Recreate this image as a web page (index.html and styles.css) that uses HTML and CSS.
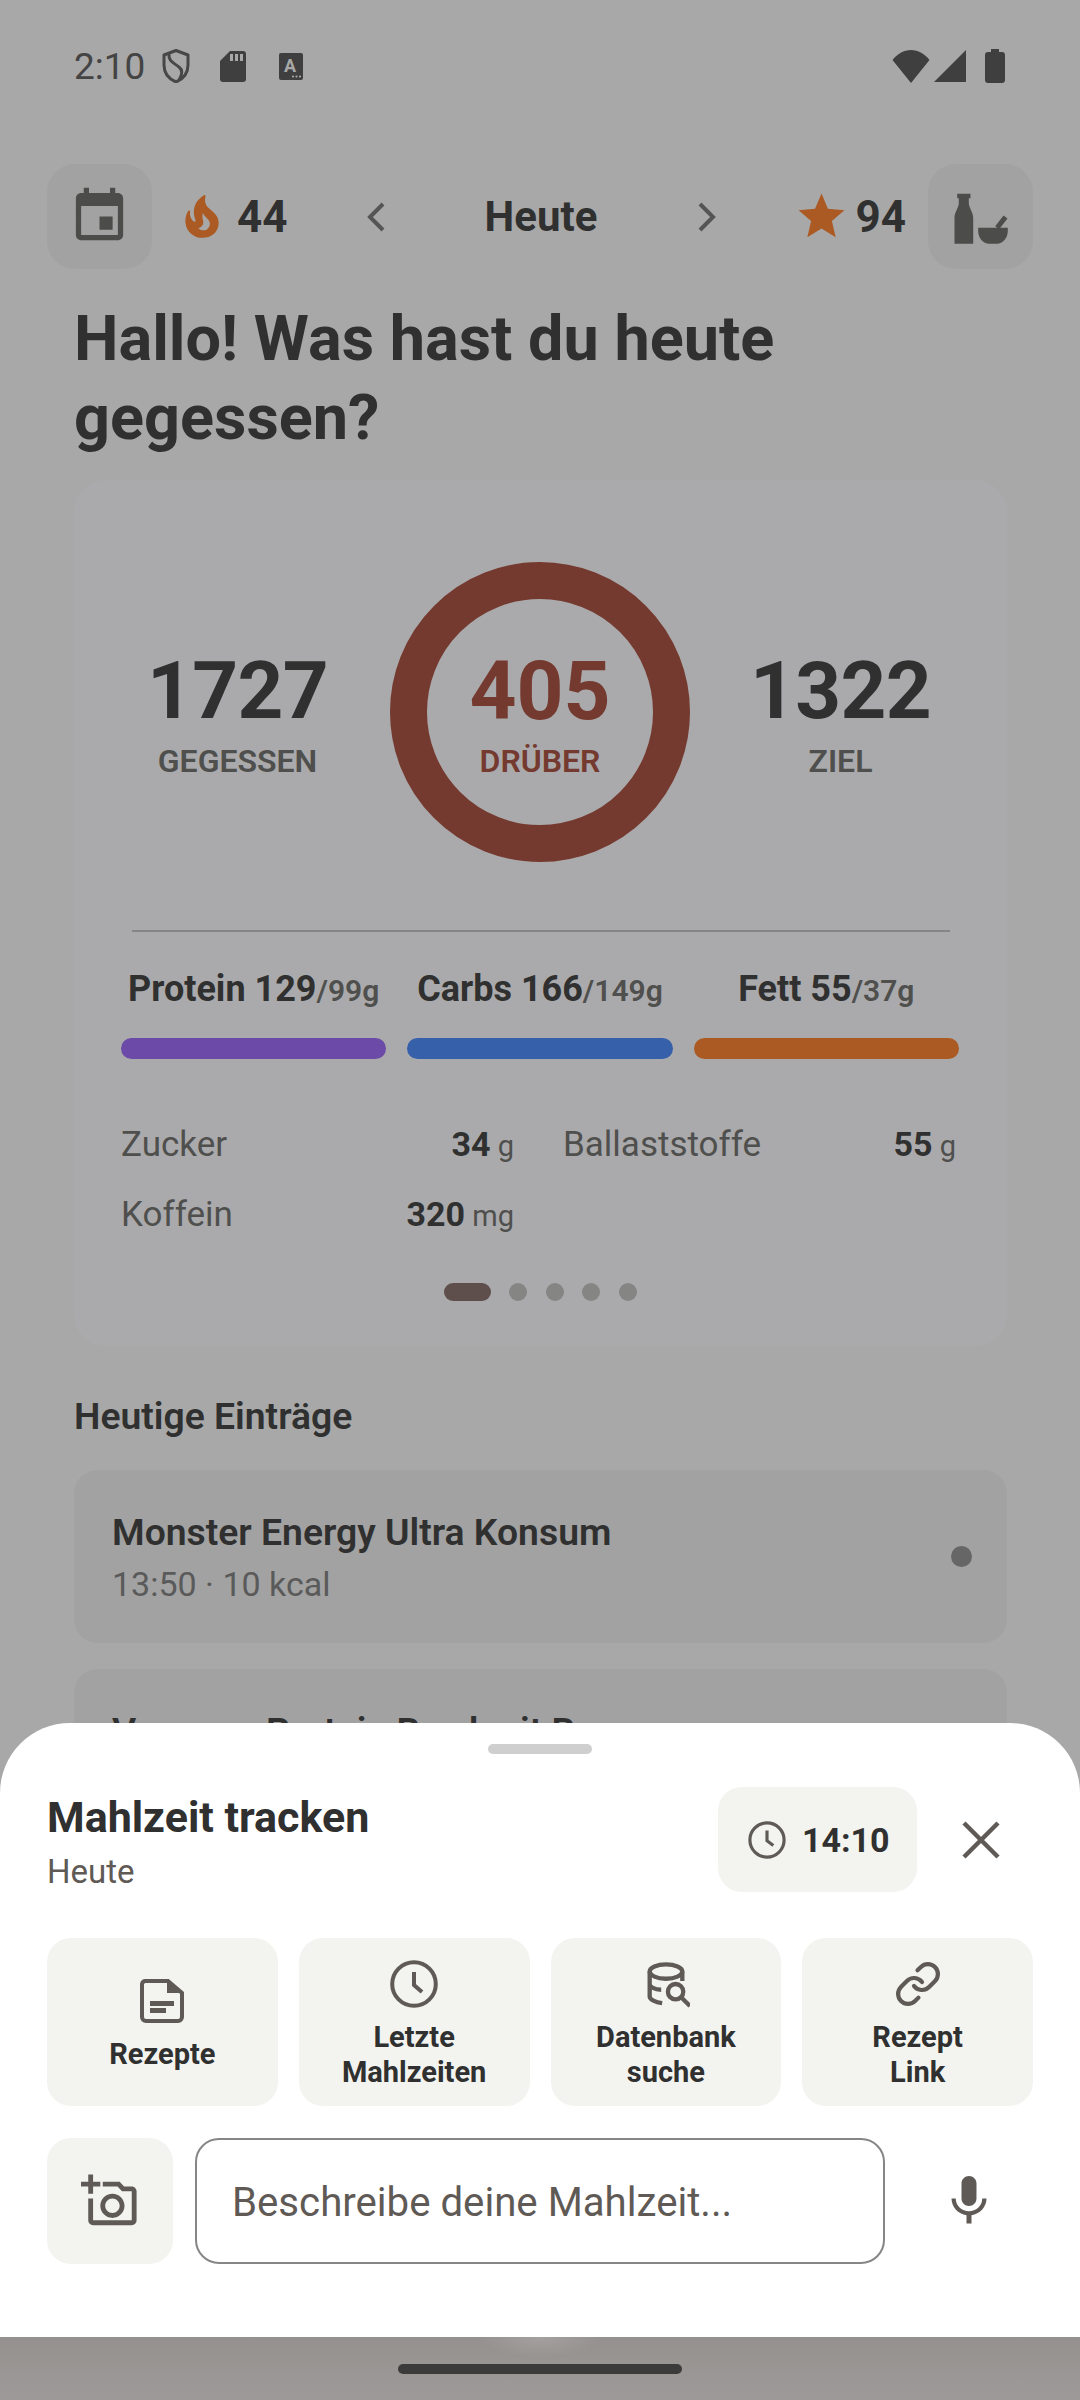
FILE: index.html
```html
<!DOCTYPE html>
<html lang="de">
<head>
    <meta charset="UTF-8">
    <meta name="viewport" content="width=device-width, initial-scale=1.0">
    <title>Mahlzeit tracken</title>
    <link rel="stylesheet" href="styles.css">
</head>
<body>
<div class="screen">
    <!-- Status bar -->
    <div class="status-bar">
        <div class="status-left">
            <span class="status-time">2:10</span>
            <svg class="ic-shield" viewBox="0 0 28 34"><path d="M14 1.5 26 6v10c0 8-5 14-12 17C7 30 2 24 2 16V6z" fill="none" stroke="#474747" stroke-width="3" stroke-linejoin="round"/><path d="M7 5c-1 7 5 9 10 13 4 3 3 8 0 13" fill="none" stroke="#474747" stroke-width="3"/></svg>
            <svg class="ic-sd" viewBox="0 0 26 31"><path d="M10 0h13a3 3 0 0 1 3 3v25a3 3 0 0 1-3 3H3a3 3 0 0 1-3-3V10z" fill="#3f3f3f"/><rect x="10" y="3" width="3" height="7" fill="#a8a8a8"/><rect x="15" y="3" width="3" height="7" fill="#a8a8a8"/><rect x="20" y="3" width="3" height="7" fill="#a8a8a8"/></svg>
            <svg class="ic-a" viewBox="0 0 24 27"><rect width="24" height="27" rx="2" fill="#3f3f3f"/><text x="11" y="18.500" font-family="Roboto, sans-serif" font-weight="700" font-size="18" text-anchor="middle" fill="#a8a8a8">A</text><circle cx="14" cy="23.500" r="1.100" fill="#a8a8a8"/><circle cx="17.500" cy="23.500" r="1.100" fill="#a8a8a8"/><circle cx="21" cy="23.500" r="1.100" fill="#a8a8a8"/></svg>
        </div>
        <div class="status-right">
            <svg class="ic-wifi" viewBox="0 0 38 33"><path d="M19 33 .5 10C5 4 12 0 19 0s14 4 18.500 10z" fill="#3f3f3f"/></svg>
            <svg class="ic-signal" viewBox="0 0 32 32"><path d="M32 0v32H0z" fill="#3f3f3f"/></svg>
            <svg class="ic-battery" viewBox="0 0 20 34"><path d="M6 0h8v3h3a3 3 0 0 1 3 3v25a3 3 0 0 1-3 3H3a3 3 0 0 1-3-3V6a3 3 0 0 1 3-3h3z" fill="#3f3f3f"/></svg>
        </div>
    </div>

    <!-- Top bar -->
    <div class="top-bar">
        <div class="square-btn">
            <svg class="ic-calendar" viewBox="0 0 24 24"><path d="M17 12h-5v5h5v-5zM16 1v2H8V1H6v2H5c-1.110 0-1.990.9-1.990 2L3 19c0 1.100.89 2 2 2h14c1.100 0 2-.9 2-2V5c0-1.100-.9-2-2-2h-1V1h-2zm3 18H5V8h14v11z"/></svg>
        </div>
        <div class="counter counter-streak">
            <svg class="ic-flame" viewBox="0 0 24 24"><path d="M19.480 12.350c-1.570-4.080-7.160-4.300-5.810-10.230.1-.44-.37-.78-.75-.55C9.290 3.710 6.680 8 8.870 13.620c.18.46-.36.89-.75.59-1.810-1.370-2-3.340-1.840-4.750.06-.52-.62-.77-.91-.34C4.690 10.160 4 11.840 4 14.370c.38 5.600 5.110 7.320 6.810 7.540 2.430.31 5.060-.14 6.950-1.870 2.080-1.930 2.840-5.010 1.720-7.690zm-9.280 5.030c1.440-.35 2.180-1.390 2.380-2.310.33-1.430-.96-2.830-.09-5.090.33 1.870 3.270 3.040 3.270 5.080.08 2.530-2.660 4.700-5.560 2.320z"/></svg>
            <span>44</span>
        </div>
        <div class="day-nav">
            <svg class="ic-chevron" viewBox="0 0 18 30"><path d="M16 2 3 15l13 13"/></svg>
            <span class="day-label">Heute</span>
            <svg class="ic-chevron" viewBox="0 0 18 30"><path d="m2 2 13 13L2 28"/></svg>
        </div>
        <div class="counter counter-stars">
            <svg class="ic-star" viewBox="0 0 24 24"><path d="M12 17.270 18.180 21l-1.640-7.030L22 9.240l-7.190-.61L12 2 9.190 8.630 2 9.240l5.460 4.730L5.820 21z"/></svg>
            <span>94</span>
        </div>
        <div class="square-btn square-btn-right">
            <svg class="ic-pantry" viewBox="0 0 60 54"><path d="M6.200 3.700H19.500V8.300H17.800V12.700C17.800 18 22.200 22 22.200 27.700V53.700H3.500V27.700C3.500 22 7.800 18 7.800 12.700V8.300H6.200Z"/><path d="M27.200 37.700H56.800V41c0 7-5 12.700-11 12.700h-7.600C32 53.700 27.200 48 27.200 41z"/><path class="ic-pestle" d="M46.200 37.700 54.500 27"/></svg>
        </div>
    </div>

    <h1 class="greeting">Hallo! Was hast du heute gegessen?</h1>

    <!-- Summary card -->
    <section class="summary-card">
        <div class="stats">
            <div class="stat stat-left">
                <div class="stat-num">1727</div>
                <div class="stat-label">GEGESSEN</div>
            </div>
            <div class="ring">
                <div class="stat-num stat-over">405</div>
                <div class="stat-label stat-over">DRÜBER</div>
            </div>
            <div class="stat stat-right">
                <div class="stat-num">1322</div>
                <div class="stat-label">ZIEL</div>
            </div>
        </div>
        <div class="divider"></div>
        <div class="macros">
            <div class="macro">
                <div class="macro-text">Protein 129<span class="macro-goal">/99g</span></div>
                <div class="macro-bar bar-protein"></div>
            </div>
            <div class="macro">
                <div class="macro-text">Carbs 166<span class="macro-goal">/149g</span></div>
                <div class="macro-bar bar-carbs"></div>
            </div>
            <div class="macro">
                <div class="macro-text">Fett 55<span class="macro-goal">/37g</span></div>
                <div class="macro-bar bar-fat"></div>
            </div>
        </div>
        <div class="nutrients">
            <div class="nutrient"><span class="nutrient-name">Zucker</span><span class="nutrient-val"><b>34</b> g</span></div>
            <div class="nutrient"><span class="nutrient-name">Ballaststoffe</span><span class="nutrient-val"><b>55</b> g</span></div>
            <div class="nutrient"><span class="nutrient-name">Koffein</span><span class="nutrient-val"><b>320</b> mg</span></div>
        </div>
        <div class="pager">
            <span class="pager-active"></span>
            <span class="pager-dot"></span>
            <span class="pager-dot"></span>
            <span class="pager-dot"></span>
            <span class="pager-dot"></span>
        </div>
    </section>

    <h2 class="entries-title">Heutige Einträge</h2>
    <div class="entry">
        <div class="entry-text">
            <div class="entry-name">Monster Energy Ultra Konsum</div>
            <div class="entry-meta">13:50 · 10 kcal</div>
        </div>
        <span class="entry-dot"></span>
    </div>
    <div class="entry">
        <div class="entry-text">
            <div class="entry-name">Veganes Protein Bowl mit Beeren</div>
        </div>
    </div>

    <!-- Bottom sheet -->
    <div class="sheet">
        <div class="sheet-handle"></div>
        <div class="sheet-header">
            <div class="sheet-titles">
                <div class="sheet-title">Mahlzeit tracken</div>
                <div class="sheet-sub">Heute</div>
            </div>
            <div class="time-btn">
                <svg class="ic-clock-small" viewBox="0 0 24 24"><circle cx="12" cy="12" r="10.800"/><path d="M12 6v6.500l4 3"/></svg>
                <span>14:10</span>
            </div>
            <svg class="ic-close" viewBox="0 0 38 38"><path d="m2 2 34 34M36 2 2 36"/></svg>
        </div>
        <div class="actions">
            <div class="action">
                <svg class="action-icon" viewBox="0 0 48 48"><path d="M7 4h23l14 12v24a4 4 0 0 1-4 4H8a4 4 0 0 1-4-4V7a4 4 0 0 1 3-3z" fill="none" stroke="#5f5a55" stroke-width="4"/><path d="M29 4v12h15z" fill="#5f5a55"/><path d="M12 24h24v5H12zM12 31h16v5H12z" fill="#5f5a55"/></svg>
                <span>Rezepte</span>
            </div>
            <div class="action">
                <svg class="action-icon" viewBox="0 0 24 24"><circle cx="12" cy="12" r="10.900" fill="none" stroke="#5f5a55" stroke-width="2"/><path d="M12 6v6.500l4 3.500" fill="none" stroke="#5f5a55" stroke-width="2"/></svg>
                <span>Letzte<br>Mahlzeiten</span>
            </div>
            <div class="action">
                <svg class="action-icon" viewBox="-3 0 50 50" fill="none" stroke="#5f5a55" stroke-width="4.500"><ellipse cx="22" cy="12" rx="17" ry="7.500"/><path d="M5 12v26c0 3 6 6 13 7M39 12v10M5 25c0 3 5 6 12 6"/><circle cx="32" cy="33" r="8"/><path d="m38 39 9 9"/></svg>
                <span>Datenbank<br>suche</span>
            </div>
            <div class="action">
                <svg class="action-icon" viewBox="0 0 24 24" fill="none" stroke="#5f5a55" stroke-width="2.100" stroke-linecap="round"><path d="M10 13a5 5 0 0 0 7.540.54l3-3a5 5 0 0 0-7.070-7.070l-1.720 1.710"/><path d="M14 11a5 5 0 0 0-7.540-.54l-3 3a5 5 0 0 0 7.070 7.070l1.710-1.710"/></svg>
                <span>Rezept<br>Link</span>
            </div>
        </div>
        <div class="composer">
            <div class="photo-btn">
                <svg class="ic-photo" viewBox="0 0 24 24"><path d="M21 6h-3.170L16 4H9v2h6.120l1.830 2H21v12H5v-9H3v9c0 1.100.9 2 2 2h16c1.100 0 2-.9 2-2V8c0-1.100-.9-2-2-2zM8 14c0 2.760 2.240 5 5 5s5-2.240 5-5-2.240-5-5-5-5 2.240-5 5zm5-3c1.650 0 3 1.350 3 3s-1.350 3-3 3-3-1.350-3-3 1.350-3 3-3zM5 6h3V4H5V1H3v3H0v2h3v3h2z"/></svg>
            </div>
            <div class="meal-input">Beschreibe deine Mahlzeit...</div>
            <svg class="ic-mic" viewBox="0 0 24 24"><path d="M12 14c1.660 0 2.990-1.340 2.990-3L15 5c0-1.660-1.340-3-3-3S9 3.340 9 5v6c0 1.660 1.340 3 3 3zm5.300-3c0 3-2.540 5.100-5.300 5.100S6.700 14 6.700 11H5c0 3.410 2.720 6.230 6 6.720V21h2v-3.280c3.280-.48 6-3.300 6-6.720h-1.700z"/></svg>
        </div>
    </div>

    <!-- Gesture bar -->
    <div class="nav-area">
        <div class="home-pill"></div>
    </div>
</div>
</body>
</html>
```

FILE: styles.css
```css
* {
    box-sizing: border-box;
}

body {
    margin: 0;
    background: #a8a8a8;
    font-family: Roboto, "Noto Sans", sans-serif;
    color: #2f302f;
}

.screen {
    position: relative;
    width: 1080px;
    height: 2400px;
    overflow: hidden;
    background: #a8a8a8;
}

/* Status bar */
.status-bar {
    display: flex;
    justify-content: space-between;
    align-items: center;
    height: 34px;
    margin-top: 49px;
    padding: 0 75px 0 74px;
}

.status-left,
.status-right {
    display: flex;
    align-items: center;
}

.status-time {
    font-size: 37px;
    color: #444;
    margin-right: 17px;
}

.ic-shield { width: 28px; height: 34px; margin-right: 30px; }
.ic-sd { width: 26px; height: 31px; margin-right: 33px; }
.ic-a { width: 24px; height: 27px; }
.ic-wifi { width: 38px; height: 33px; margin-right: 4px; }
.ic-signal { width: 32px; height: 32px; margin-right: 19px; }
.ic-battery { width: 20px; height: 34px; }

/* Top bar */
.top-bar {
    display: flex;
    align-items: center;
    height: 105px;
    margin-top: 81px;
    padding: 0 47px;
}

.square-btn {
    display: flex;
    justify-content: center;
    align-items: center;
    width: 105px;
    height: 105px;
    border-radius: 28px;
    background: #a2a2a2;
    flex-shrink: 0;
}

.square-btn-right {
    margin-left: auto;
}

.ic-calendar {
    width: 63px;
    height: 63px;
    fill: #4c4c4a;
}

.ic-pantry {
    width: 60px;
    height: 54px;
    fill: #4c4c4a;
}

.ic-pestle {
    fill: none;
    stroke: #4c4c4a;
    stroke-width: 5;
}

.counter {
    display: flex;
    align-items: center;
    font-size: 44px;
    font-weight: 700;
}

.counter-streak {
    margin-left: 25px;
}

.ic-flame {
    width: 50px;
    height: 50px;
    fill: #ab5a23;
    margin-right: 10px;
}

.counter-stars {
    margin-left: 78px;
}

.ic-star {
    width: 55px;
    height: 55px;
    fill: #ab5a23;
    margin-right: 7px;
}

.day-nav {
    display: flex;
    align-items: center;
    margin-left: 79px;
}

.day-label {
    font-size: 42px;
    font-weight: 700;
    width: 313px;
    text-align: center;
}

.ic-chevron {
    width: 18px;
    height: 30px;
    fill: none;
    stroke: #555;
    stroke-width: 4;
}

.greeting {
    margin: 30px 74px 0;
    font-size: 63px;
    line-height: 79px;
    font-weight: 700;
}

/* Summary card */
.summary-card {
    margin: 23px 73px 0 74px;
    height: 866px;
    padding: 82px 48px 0 47px;
    border-radius: 32px;
    background: #aaaaac;
}

.stats {
    display: grid;
    grid-template-columns: 269px 300px 269px;
}

.stat,
.ring {
    display: flex;
    flex-direction: column;
    justify-content: center;
    align-items: center;
    padding-top: 5px;
}

.stat-left { padding-right: 36px; }
.stat-right { padding-left: 32px; }

.ring {
    width: 300px;
    height: 300px;
    border: 37px solid #753a2f;
    border-radius: 50%;
}

.stat-num {
    font-size: 80px;
    line-height: 80px;
    font-weight: 700;
    letter-spacing: -0.7px;
}

.ring .stat-num {
    font-size: 82px;
    letter-spacing: 0;
}

.stat-label {
    margin-top: 12px;
    font-size: 32px;
    line-height: 36px;
    font-weight: 600;
    color: #4f4f4d;
}

.ring .stat-over {
    color: #753a2f;
}

.divider {
    height: 2px;
    margin: 68px 9px 0 11px;
    background: #858585;
}

.macros {
    display: grid;
    grid-template-columns: repeat(3, 1fr);
    column-gap: 21px;
    margin-top: 35px;
}

.macro-text {
    font-size: 36px;
    line-height: 44px;
    font-weight: 700;
    text-align: center;
    white-space: nowrap;
}

.macro-goal {
    font-size: 30px;
    font-weight: 600;
    color: #4f4f4d;
}

.macro-bar {
    height: 21px;
    margin-top: 25px;
    border-radius: 11px;
}

.bar-protein { background: #6b4aa8; }
.bar-carbs { background: #3660aa; }
.bar-fat { background: #ab5a23; }

.nutrients {
    display: grid;
    grid-template-columns: 393px 393px;
    column-gap: 49px;
    row-gap: 21.500px;
    margin-top: 62px;
}

.nutrient {
    display: flex;
    justify-content: space-between;
    align-items: baseline;
    line-height: 46px;
}

.nutrient-name {
    font-size: 35px;
    color: #4f4f4d;
}

.nutrient-val {
    font-size: 29px;
    color: #4f4f4d;
}

.nutrient-val b {
    font-size: 34px;
    color: #2f302f;
}

.pager {
    display: flex;
    justify-content: center;
    align-items: center;
    gap: 18.500px;
    margin-top: 44.500px;
}

.pager-active {
    width: 47px;
    height: 18px;
    border-radius: 9px;
    background: #5f4f4c;
}

.pager-dot {
    width: 18px;
    height: 18px;
    border-radius: 50%;
    background: #858684;
}

/* Entries */
.entries-title {
    margin: 48px 74px 0;
    font-size: 37.300px;
    line-height: 44px;
    font-weight: 600;
}

.entry {
    display: flex;
    justify-content: space-between;
    align-items: center;
    height: 173px;
    margin: 26px 73px 0 74px;
    padding: 0 35px 0 38px;
    border-radius: 24px;
    background: #a2a2a2;
}

.entries-title + .entry {
    margin-top: 32px;
}

.entry-text {
    height: 94px;
}

.entry-name {
    font-size: 37.300px;
    line-height: 44px;
    font-weight: 600;
}

.entry-meta {
    margin-top: 10px;
    font-size: 34px;
    line-height: 40px;
    color: #5a5a5a;
}

.entry-dot {
    width: 21px;
    height: 21px;
    border-radius: 50%;
    background: #666;
}

/* Bottom sheet */
.sheet {
    position: absolute;
    left: 0;
    right: 0;
    top: 1723px;
    bottom: 63px;
    padding: 21px 47px 0;
    border-radius: 70px 70px 0 0;
    background: #fff;
}

.sheet-handle {
    width: 104px;
    height: 10px;
    margin: 0 auto;
    border-radius: 5px;
    background: #cfcfcf;
}

.sheet-header {
    display: flex;
    align-items: center;
    height: 105px;
    margin-top: 33px;
}

.sheet-titles {
    flex: 1;
    padding-top: 3px;
}

.sheet-title {
    font-size: 43px;
    line-height: 48px;
    font-weight: 700;
}

.sheet-sub {
    margin-top: 13px;
    font-size: 33px;
    line-height: 36px;
    color: #5f5a55;
}

.time-btn {
    display: flex;
    align-items: center;
    gap: 16px;
    width: 199px;
    height: 105px;
    padding-left: 30px;
    border-radius: 24px;
    background: #f3f4ef;
    font-size: 34px;
    font-weight: 700;
}

.ic-clock-small {
    width: 38px;
    height: 38px;
    fill: none;
    stroke: #5f5a55;
    stroke-width: 2;
}

.ic-close {
    width: 38px;
    height: 38px;
    margin: 0 33px 0 45px;
    fill: none;
    stroke: #5f5a55;
    stroke-width: 4.500;
}

.actions {
    display: grid;
    grid-template-columns: repeat(4, 1fr);
    column-gap: 21px;
    margin-top: 46px;
}

.action {
    display: flex;
    flex-direction: column;
    justify-content: center;
    align-items: center;
    gap: 12px;
    height: 168px;
    padding-top: 5px;
    border-radius: 24px;
    background: #f3f4ef;
    font-size: 29px;
    line-height: 35px;
    font-weight: 700;
    text-align: center;
}

.action-icon {
    width: 48px;
    height: 48px;
}

.composer {
    display: flex;
    align-items: center;
    margin-top: 32px;
}

.photo-btn {
    display: flex;
    justify-content: center;
    align-items: center;
    width: 126px;
    height: 126px;
    border-radius: 24px;
    background: #f3f4ef;
}

.ic-photo {
    width: 58px;
    height: 58px;
    fill: #5f5a55;
}

.meal-input {
    display: flex;
    align-items: center;
    width: 690px;
    height: 126px;
    margin-left: 22px;
    padding: 2px 0 0 35px;
    border: 2.500px solid #868686;
    border-radius: 24px;
    font-size: 40.200px;
    color: #5f5a55;
}

.ic-mic {
    width: 60px;
    height: 60px;
    margin-left: 54px;
    fill: #5f5a55;
}

/* Gesture bar */
.nav-area {
    position: absolute;
    left: 0;
    right: 0;
    bottom: 0;
    height: 63px;
    display: flex;
    justify-content: center;
    padding-top: 27px;
    background: radial-gradient(ellipse 60px 20px at 50% 0, #a4a09d, transparent 100%), linear-gradient(#96918e, #9c9a99);
}

.home-pill {
    width: 284px;
    height: 10px;
    border-radius: 5px;
    background: #3b3b3b;
}
```
